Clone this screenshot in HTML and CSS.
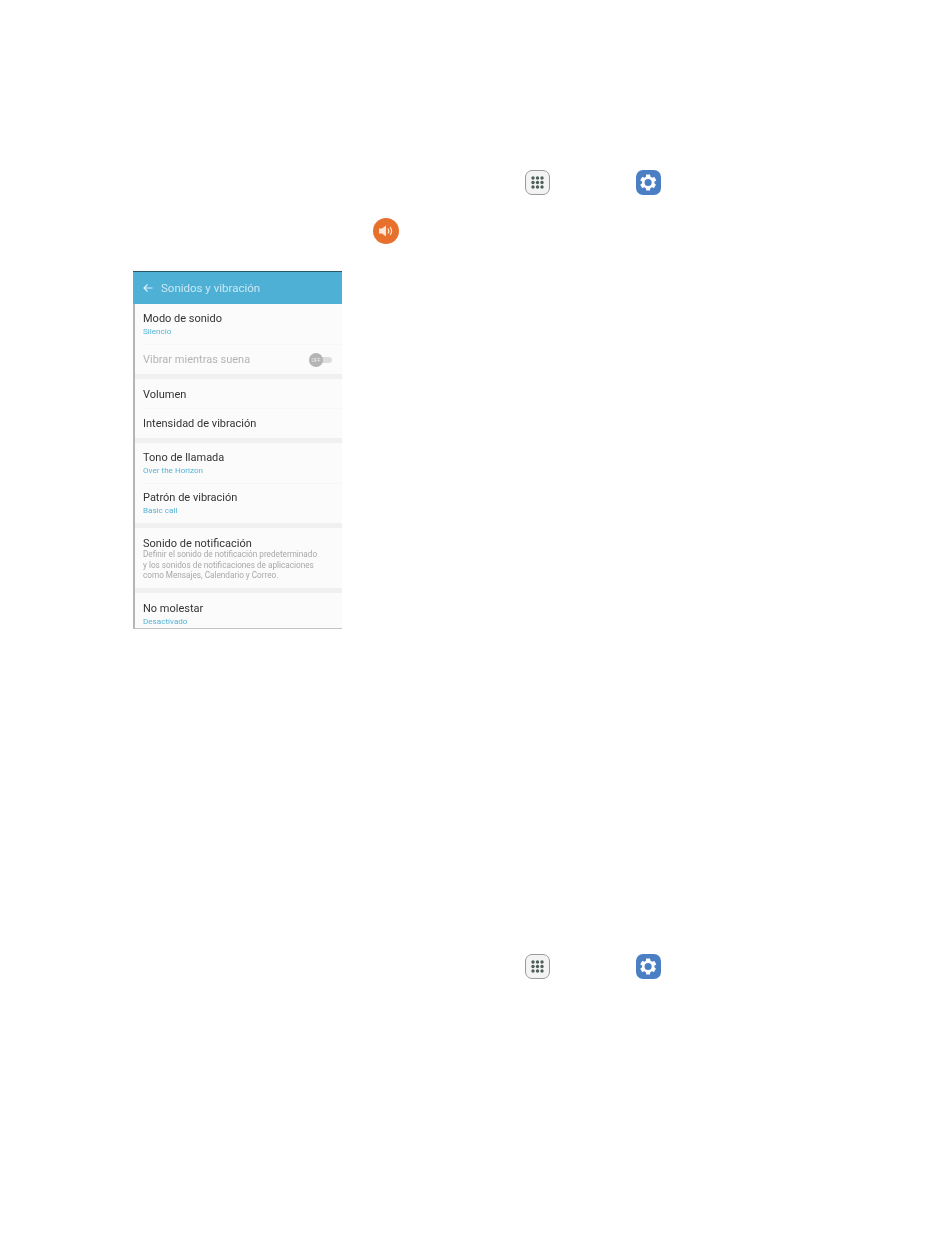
FILE: index.html
```html
<!DOCTYPE html>
<html lang="es">
<head>
    <meta charset="UTF-8">
    <meta name="viewport" content="width=device-width, initial-scale=1.0">
    <title>Sonidos y vibración</title>
    <link rel="stylesheet" href="styles.css">
</head>
<body>
    <div class="icon-row icon-row-first">
        <span class="apps-icon">
            <svg width="13" height="13" viewBox="0 0 13 13">
                <g fill="#4f5f58">
                    <circle cx="2" cy="2" r="1.7"/><circle cx="6.5" cy="2" r="1.7"/><circle cx="11" cy="2" r="1.7"/>
                    <circle cx="2" cy="6.5" r="1.7"/><circle cx="6.5" cy="6.5" r="1.7"/><circle cx="11" cy="6.5" r="1.7"/>
                    <circle cx="2" cy="11" r="1.7"/><circle cx="6.5" cy="11" r="1.7"/><circle cx="11" cy="11" r="1.7"/>
                </g>
            </svg>
        </span>
        <span class="gear-icon">
            <svg width="19" height="19" viewBox="0 0 24 24">
                <path fill="#fff" fill-rule="evenodd" d="M19.4 13c.1-.3.1-.7.1-1s0-.7-.1-1l2.1-1.6c.2-.2.2-.4.1-.6l-2-3.5c-.1-.2-.4-.3-.6-.2l-2.5 1c-.5-.4-1.1-.7-1.7-1L14 2.4c0-.2-.2-.4-.5-.4h-4c-.2 0-.5.2-.5.4l-.4 2.7c-.6.2-1.1.6-1.7 1l-2.5-1c-.2-.1-.5 0-.6.2l-2 3.5c-.1.2-.1.5.1.6L4 11c0 .3-.1.7-.1 1s0 .7.1 1l-2.1 1.6c-.2.2-.2.4-.1.6l2 3.5c.1.2.4.3.6.2l2.5-1c.5.4 1.1.7 1.7 1l.4 2.7c0 .2.2.4.5.4h4c.2 0 .5-.2.5-.4l.4-2.7c.6-.2 1.1-.6 1.7-1l2.5 1c.2.1.5 0 .6-.2l2-3.5c.1-.2.1-.5-.1-.6L19.4 13zM11.5 16.5a4.5 4.5 0 1 1 0-9 4.5 4.5 0 0 1 0 9z"/>
            </svg>
        </span>
    </div>

    <div class="icon-row icon-row-sound">
        <span class="sound-icon">
            <svg width="16" height="14" viewBox="0 0 16 14">
                <path fill="#fbe6d8" d="M1 4.5h3L8 1.5v11l-4-3H1z"/>
                <path fill="none" stroke="#fbe6d8" stroke-width="1.2" d="M10 4.5c1 1.5 1 3.5 0 5M12.2 3c1.7 2.4 1.7 5.6 0 8"/>
            </svg>
        </span>
    </div>

    <section class="phone">
        <header class="phone-bar">
            <svg class="back-arrow" width="10" height="10" viewBox="0 0 10 10">
                <path fill="none" stroke="#e3f3fa" stroke-width="1.1" d="M9.5 5H1M4.5 1.5 1 5l3.5 3.5"/>
            </svg>
            <span class="phone-title">Sonidos y vibración</span>
        </header>
        <div class="phone-list">
            <div class="item item-line item-modo">
                <div class="item-title">Modo de sonido</div>
                <div class="item-value">Silencio</div>
            </div>
            <div class="item item-vibrar">
                <div class="item-title item-off">Vibrar mientras suena</div>
                <div class="switch"><span class="switch-knob">OFF</span></div>
            </div>
            <div class="gap"></div>
            <div class="item item-line item-volumen"><div class="item-title">Volumen</div></div>
            <div class="item item-plain"><div class="item-title">Intensidad de vibración</div></div>
            <div class="gap"></div>
            <div class="item item-line item-tono">
                <div class="item-title">Tono de llamada</div>
                <div class="item-value">Over the Horizon</div>
            </div>
            <div class="item item-patron">
                <div class="item-title">Patrón de vibración</div>
                <div class="item-value">Basic call</div>
            </div>
            <div class="gap"></div>
            <div class="item item-notif">
                <div class="item-title">Sonido de notificación</div>
                <div class="item-desc">Definir el sonido de notificación predeterminado<br>y los sonidos de notificaciones de aplicaciones<br>como Mensajes, Calendario y Correo.</div>
            </div>
            <div class="gap"></div>
            <div class="item item-molestar">
                <div class="item-title">No molestar</div>
                <div class="item-value">Desactivado</div>
            </div>
        </div>
    </section>

    <div class="icon-row icon-row-last">
        <span class="apps-icon">
            <svg width="13" height="13" viewBox="0 0 13 13">
                <g fill="#4f5f58">
                    <circle cx="2" cy="2" r="1.7"/><circle cx="6.5" cy="2" r="1.7"/><circle cx="11" cy="2" r="1.7"/>
                    <circle cx="2" cy="6.5" r="1.7"/><circle cx="6.5" cy="6.5" r="1.7"/><circle cx="11" cy="6.5" r="1.7"/>
                    <circle cx="2" cy="11" r="1.7"/><circle cx="6.5" cy="11" r="1.7"/><circle cx="11" cy="11" r="1.7"/>
                </g>
            </svg>
        </span>
        <span class="gear-icon">
            <svg width="19" height="19" viewBox="0 0 24 24">
                <path fill="#fff" fill-rule="evenodd" d="M19.4 13c.1-.3.1-.7.1-1s0-.7-.1-1l2.1-1.6c.2-.2.2-.4.1-.6l-2-3.5c-.1-.2-.4-.3-.6-.2l-2.5 1c-.5-.4-1.1-.7-1.7-1L14 2.4c0-.2-.2-.4-.5-.4h-4c-.2 0-.5.2-.5.4l-.4 2.7c-.6.2-1.1.6-1.7 1l-2.5-1c-.2-.1-.5 0-.6.2l-2 3.5c-.1.2-.1.5.1.6L4 11c0 .3-.1.7-.1 1s0 .7.1 1l-2.1 1.6c-.2.2-.2.4-.1.6l2 3.5c.1.2.4.3.6.2l2.5-1c.5.4 1.1.7 1.7 1l.4 2.7c0 .2.2.4.5.4h4c.2 0 .5-.2.5-.4l.4-2.7c.6-.2 1.1-.6 1.7-1l2.5 1c.2.1.5 0 .6-.2l2-3.5c.1-.2.1-.5-.1-.6L19.4 13zM11.5 16.5a4.5 4.5 0 1 1 0-9 4.5 4.5 0 0 1 0 9z"/>
            </svg>
        </span>
    </div>
</body>
</html>
```

FILE: styles.css
```css
body {
    margin: 0;
    background-color: #fff;
    font-family: Roboto, "Liberation Sans", sans-serif;
}

.icon-row {
    display: flex;
    align-items: center;
    filter: blur(0.3px);
}

.icon-row-first {
    height: 25px;
    padding-top: 170px;
    padding-left: 525px;
    gap: 86px;
}

.icon-row-sound {
    height: 26px;
    padding-top: 23px;
    padding-left: 373px;
}

.icon-row-last {
    height: 25px;
    padding-top: 325px;
    padding-left: 525px;
    gap: 86px;
}

.apps-icon {
    display: flex;
    justify-content: center;
    align-items: center;
    box-sizing: border-box;
    width: 25px;
    height: 25px;
    border: 1px solid #9a9c9b;
    border-radius: 7px;
    background-color: #f3f3f3;
}

.gear-icon {
    display: flex;
    justify-content: center;
    align-items: center;
    width: 25px;
    height: 25px;
    border-radius: 7px;
    background-color: #4a7fc4;
}

.sound-icon {
    display: flex;
    justify-content: center;
    align-items: center;
    width: 26px;
    height: 26px;
    border-radius: 50%;
    background-color: #e8702d;
}

.phone {
    box-sizing: border-box;
    width: 209px;
    height: 358px;
    margin-top: 27px;
    margin-left: 133px;
    border-top: 1px solid #27576a;
    filter: blur(0.5px);
}

.phone-bar {
    display: flex;
    align-items: center;
    height: 32px;
    padding-left: 10px;
    background-color: #4fb0d6;
}

.back-arrow {
    margin-right: 8px;
}

.phone-title {
    font-size: 11.5px;
    color: #c9e7f3;
}

.phone-list {
    box-sizing: border-box;
    height: 325px;
    padding-left: 8px;
    border-left: 2px solid #b5b5b5;
    border-bottom: 1px solid #c4c4c4;
    background-color: #fbfbfb;
}

.gap {
    height: 5px;
    margin-left: -8px;
    background-color: #f0f0f0;
}

.item {
    box-sizing: border-box;
    padding-top: 8px;
}

.item-line {
    border-bottom: 1px solid #f6f6f6;
}

.item-modo {
    height: 41px;
}

.item-vibrar {
    display: flex;
    justify-content: space-between;
    align-items: center;
    height: 29px;
    padding-top: 0;
    padding-right: 10px;
}

.item-volumen {
    height: 29.5px;
    padding-top: 9px;
}

.item-plain {
    height: 29.5px;
}

.item-tono {
    height: 41px;
}

.item-patron {
    height: 39px;
    padding-top: 7px;
}

.item-notif {
    height: 60px;
    padding-top: 9px;
}

.item-molestar {
    height: 35px;
    padding-top: 9px;
}

.item-title {
    font-size: 11px;
    line-height: 13px;
    color: #333;
}

.item-off {
    color: #b4b4b4;
}

.item-value {
    margin-top: 1px;
    font-size: 8.1px;
    line-height: 10px;
    color: #55b3d6;
}

.item-desc {
    margin-top: -1px;
    font-size: 8.2px;
    line-height: 10.5px;
    color: #a8a8a8;
}

.switch {
    display: flex;
    align-items: center;
    width: 23px;
    height: 6px;
    border-radius: 3px;
    background-color: #dcdcdc;
}

.switch-knob {
    display: flex;
    justify-content: center;
    align-items: center;
    width: 14px;
    height: 14px;
    border-radius: 50%;
    background-color: #b4b4b4;
    font-size: 5px;
    color: #eee;
}
```
